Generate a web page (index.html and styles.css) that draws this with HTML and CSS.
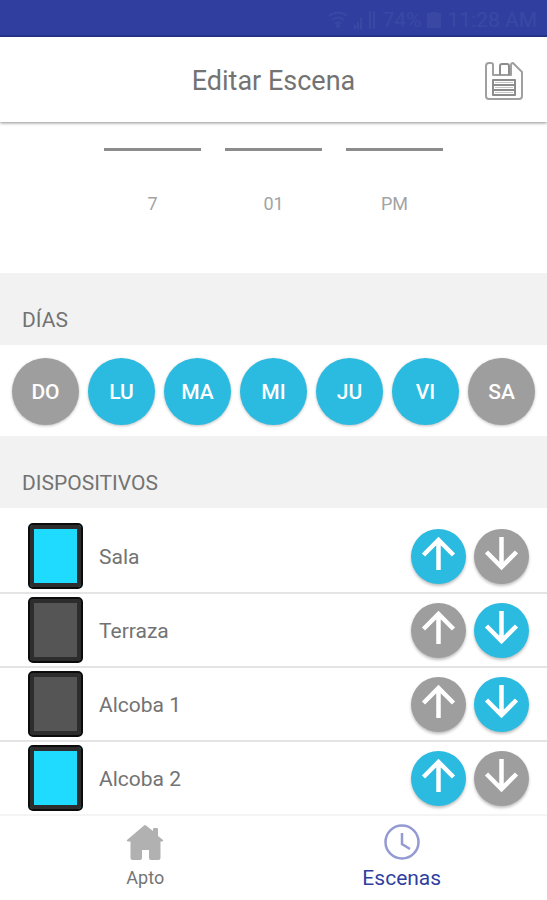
FILE: index.html
```html
<!DOCTYPE html>
<html lang="es">
<head>
    <meta charset="UTF-8">
    <meta name="viewport" content="width=device-width, initial-scale=1.0">
    <title>Editar Escena</title>
    <link rel="stylesheet" href="styles.css">
</head>
<body>
    <svg width="0" height="0" class="sprite" aria-hidden="true">
        <symbol id="arrow-up" viewBox="0 0 55 55">
            <path d="M27.500 41V12M12.500 26L27.500 11L42.500 26" fill="none" stroke="currentColor" stroke-width="4.500"/>
        </symbol>
        <symbol id="arrow-down" viewBox="0 0 55 55">
            <path d="M27.500 8V38M12.500 23L27.500 38L42.500 23" fill="none" stroke="currentColor" stroke-width="4.500"/>
        </symbol>
    </svg>

    <div class="status-bar">
        <svg width="20" height="17" viewBox="0 0 20 17" fill="none" stroke="currentColor" stroke-width="2">
            <path d="M1 5Q10 -2 19 5M4 9Q10 4 16 9M7 13Q10 10 13 13"/>
            <circle cx="10" cy="15" r="1"/>
        </svg>
        <svg width="22" height="18" viewBox="0 0 22 18" fill="currentColor">
            <path d="M0 14h2v4H0zM3 11h2v7H3zM6 7h2v11H6zM15 0h2v18h-2zM19 0h2v18h-2z"/>
        </svg>
        <span>74%</span>
        <svg width="14" height="16" viewBox="0 0 14 16" fill="currentColor">
            <path d="M0 1h4V0h6v1h4v15H0z"/>
        </svg>
        <span>11:28 AM</span>
    </div>

    <header class="header">
        <h1>Editar Escena</h1>
        <button class="save" aria-label="Guardar">
            <svg width="38" height="38" viewBox="0 0 38 38" fill="none" stroke="#a0a0a0" stroke-width="2" stroke-linejoin="round">
                <path d="M4 1h2q2 0 2 2v10h18V3q0-2 2-2L37 10v24q0 3-3 3H4q-3 0-3-3V4q0-3 3-3z"/>
                <path d="M15 13V4q0-2 2-2h5q2 0 2 2v9" stroke="#8c8c8c"/>
                <path d="M8 18h22v15H8zM8 23h22M8 28h22" stroke="#8c8c8c"/>
                <path d="M10 20.500h18M10 25.500h18M10 30.500h18" stroke="#c4c4c4" stroke-width="1"/>
            </svg>
        </button>
    </header>

    <main class="content">
        <div class="time">
            <div class="time-col">7</div>
            <div class="time-col">01</div>
            <div class="time-col">PM</div>
        </div>

        <h2 class="section-title">DÍAS</h2>
        <div class="days">
            <button class="day">DO</button>
            <button class="day active">LU</button>
            <button class="day active">MA</button>
            <button class="day active">MI</button>
            <button class="day active">JU</button>
            <button class="day active">VI</button>
            <button class="day">SA</button>
        </div>

        <h2 class="section-title">DISPOSITIVOS</h2>
        <ul class="devices">
            <li class="device">
                <span class="blind open"></span>
                <span class="name">Sala</span>
                <button class="move active" aria-label="Subir Sala"><svg><use href="#arrow-up"/></svg></button>
                <button class="move" aria-label="Bajar Sala"><svg><use href="#arrow-down"/></svg></button>
            </li>
            <li class="device">
                <span class="blind"></span>
                <span class="name">Terraza</span>
                <button class="move" aria-label="Subir Terraza"><svg><use href="#arrow-up"/></svg></button>
                <button class="move active" aria-label="Bajar Terraza"><svg><use href="#arrow-down"/></svg></button>
            </li>
            <li class="device">
                <span class="blind"></span>
                <span class="name">Alcoba 1</span>
                <button class="move" aria-label="Subir Alcoba 1"><svg><use href="#arrow-up"/></svg></button>
                <button class="move active" aria-label="Bajar Alcoba 1"><svg><use href="#arrow-down"/></svg></button>
            </li>
            <li class="device">
                <span class="blind open"></span>
                <span class="name">Alcoba 2</span>
                <button class="move active" aria-label="Subir Alcoba 2"><svg><use href="#arrow-up"/></svg></button>
                <button class="move" aria-label="Bajar Alcoba 2"><svg><use href="#arrow-down"/></svg></button>
            </li>
        </ul>
    </main>

    <nav class="tabs">
        <a class="tab" href="#apto">
            <svg width="38" height="38" viewBox="0 0 38 38" fill="#b1b1b1">
                <path d="M18 2.500q1-1 2 0L27 8V6q0-1 1-1h3q1 0 1 1v7l5 4q1 1-1 1.500h-1.500V35q0 2-2 2H25q-2 0-2-2v-8h-7v8q0 2-2 2H6.500q-2 0-2-2V18.500H2q-2-.5-1-1.500z"/>
            </svg>
            Apto
        </a>
        <a class="tab current" href="#escenas">
            <svg width="38" height="38" viewBox="0 0 38 38" fill="none" stroke="#939bd2" stroke-width="2.500">
                <circle cx="19" cy="19" r="16.500"/>
                <path d="M19 10v11l8 5"/>
            </svg>
            Escenas
        </a>
    </nav>

    <script>
        document.querySelectorAll('.day').forEach(function (day) {
            day.addEventListener('click', function () {
                day.classList.toggle('active');
            });
        });

        document.querySelectorAll('.device').forEach(function (device) {
            let buttons = device.querySelectorAll('.move');
            buttons.forEach(function (button, index) {
                button.addEventListener('click', function () {
                    buttons.forEach(function (b) { b.classList.remove('active'); });
                    button.classList.add('active');
                    device.querySelector('.blind').classList.toggle('open', index === 0);
                });
            });
        });
    </script>
</body>
</html>
```
FILE: styles.css
```css
* {
    box-sizing: border-box;
}
body {
    display: flex;
    flex-direction: column;
    min-height: 100vh;
    margin: 0;
    background: #fff;
    color: #737373;
    font-family: Roboto, sans-serif;
    font-size: 21px;
}
button {
    padding: 0;
    border: none;
    font-family: inherit;
    cursor: pointer;
}
.sprite {
    position: absolute;
}
.status-bar {
    display: flex;
    justify-content: flex-end;
    align-items: center;
    gap: 6px;
    height: 37px;
    padding: 4px 10px 0;
    background: #303f9f;
    border-bottom: 2px solid #26358f;
    color: #3a48a4;
    font-size: 21px;
}
.header {
    display: grid;
    grid-template-columns: 38px 1fr 38px;
    align-items: center;
    height: 85px;
    padding: 2px 24px 0;
    box-shadow: 0 1px 3px rgba(0, 0, 0, 0.45);
}
.header h1 {
    grid-column: 2;
    margin: 0;
    font-size: 27px;
    font-weight: 400;
    line-height: 30px;
    text-align: center;
}
.save {
    height: 38px;
    background: none;
}
.content {
    flex: 1;
}
.time {
    display: flex;
    justify-content: center;
    gap: 24px;
    height: 151px;
    padding-top: 26px;
}
.time-col {
    width: 97px;
    padding-top: 40px;
    border-top: 3px solid #8c8c8c;
    color: #a3a3a3;
    font-size: 18px;
    line-height: 26px;
    text-align: center;
}
.section-title {
    height: 72px;
    margin: 0;
    padding: 32px 22px 0;
    background: #f2f2f2;
    font-size: 21px;
    font-weight: 400;
    line-height: 30px;
}
.days {
    display: flex;
    justify-content: space-between;
    padding: 13px 12px 11px;
}
.day {
    width: 67px;
    height: 67px;
    border-radius: 50%;
    background: #9e9e9e;
    box-shadow: 0 1px 3px rgba(0, 0, 0, 0.25);
    color: #fff;
    font-size: 21px;
    font-weight: 500;
}
.devices {
    margin: 0;
    padding: 12px 0 0;
    list-style: none;
}
.device {
    display: flex;
    align-items: center;
    gap: 8px;
    height: 74px;
    padding: 0 18px 0 28px;
    border-bottom: 2px solid #e4e4e4;
}
.device:last-child {
    border-bottom-color: #f4f4f4;
}
.blind {
    width: 55px;
    height: 66px;
    border: 2px solid #0c0c0c;
    border-radius: 5px;
    background: #555;
    box-shadow: inset 0 0 0 4px #2d2d2d;
}
.blind.open {
    background: #1edbff;
}
.name {
    flex: 1;
    padding: 2px 0 0 8px;
}
.move {
    width: 55px;
    height: 55px;
    border-radius: 50%;
    background: #9e9e9e;
    box-shadow: 0 2px 3px rgba(0, 0, 0, 0.25);
    color: #fff;
}
.move svg {
    display: block;
    width: 55px;
    height: 55px;
}
.day.active,
.move.active {
    background: #2bbae0;
}
.tabs {
    display: flex;
    height: 84px;
    padding: 7px 17px 0;
}
.tab {
    display: flex;
    flex: 1;
    flex-direction: column;
    align-items: center;
    gap: 4px;
    color: #757575;
    font-size: 18px;
    line-height: 26px;
    text-decoration: none;
}
.tab.current {
    color: #303f9f;
    font-size: 21px;
}
```
